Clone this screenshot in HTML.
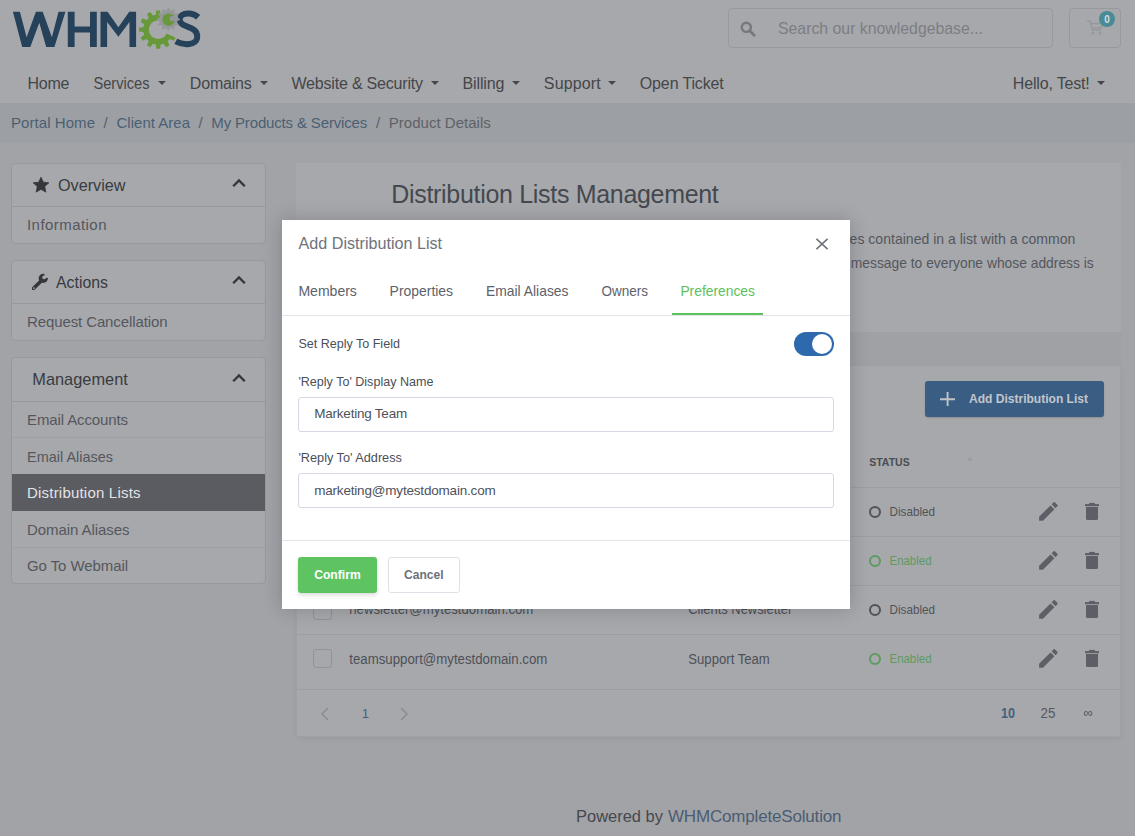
<!DOCTYPE html>
<html><head><meta charset="utf-8"><style>
html,body{margin:0;padding:0;width:1135px;height:836px;overflow:hidden;background:#a2a3a7;}
body{position:relative;font-family:"Liberation Sans", sans-serif;}
.r{position:absolute;}
text{white-space:pre;}
</style></head><body>
<div class="r" style="left:0px;top:0px;width:1135px;height:103px;background:#a7a8ac;"></div>
<div class="r" style="left:0px;top:103px;width:1135px;height:40px;background:#9c9fa3;"></div>
<div class="r" style="left:0px;top:143px;width:1135px;height:693px;background:#a2a3a7;"></div>
<svg class="r" style="left:0;top:0" width="260" height="60" viewBox="0 0 260 60">
<path d="M12.9,11.7 L19.9,11.7 L26.6,37.2 L35.9,11.7 L42.7,11.7 L51.9,37.2 L58.5,11.7 L65.4,11.7 L54.4,46.9 L46.2,46.9 L39.3,22.8 L30.3,46.9 L22.2,46.9 Z M67.8,11.7 H74.6 V26.4 H90 V11.7 H96.8 V46.9 H90 V32.6 H74.6 V46.9 H67.8 Z M100.5,11.7 L107.6,11.7 L118.4,27.2 L129.2,11.7 L136.1,11.7 L136.1,46.9 L129.5,46.9 L129.5,22 L118.4,36.8 L107.1,22 L107.1,46.9 L100.5,46.9 Z" fill="#26425a"/>
<path d="M198.2,17.2 C193.5,12.8 185.5,12.6 182,15.2 C178.3,18 178.8,22.8 184.2,25.2 L191.8,28.6 C197,31 197.6,35.2 197,38.6 C195.6,44.6 184.5,46 175.8,41.3" fill="none" stroke="#26425a" stroke-width="6"/>
<defs><mask id="m1"><rect width="260" height="60" fill="#fff"/><path d="M158.2,29.6 L176.74,-27.46 L240,-40 L240,67.74 Z" fill="#000"/></mask></defs>
<g mask="url(#m1)"><path d="M155.78,14.80 L156.28,10.40 L160.12,10.40 L160.62,14.80 L163.50,15.57 L166.14,12.01 L169.46,13.93 L167.70,17.99 L169.81,20.10 L173.87,18.34 L175.79,21.66 L172.23,24.30 L173.00,27.18 L177.40,27.68 L177.40,31.52 L173.00,32.02 L172.23,34.90 L175.79,37.54 L173.87,40.86 L169.81,39.10 L167.70,41.21 L169.46,45.27 L166.14,47.19 L163.50,43.63 L160.62,44.40 L160.12,48.80 L156.28,48.80 L155.78,44.40 L152.90,43.63 L150.26,47.19 L146.94,45.27 L148.70,41.21 L146.59,39.10 L142.53,40.86 L140.61,37.54 L144.17,34.90 L143.40,32.02 L139.00,31.52 L139.00,27.68 L143.40,27.18 L144.17,24.30 L140.61,21.66 L142.53,18.34 L146.59,20.10 L148.70,17.99 L146.94,13.93 L150.26,12.01 L152.90,15.57Z" fill="#67983a"/><circle cx="158.2" cy="29.6" r="9.4" fill="#a7a8ac"/></g>
<path d="M167.10,10.29 L167.51,8.04 L169.29,8.04 L169.70,10.29 L171.83,10.86 L173.31,9.11 L174.86,10.00 L174.08,12.16 L175.64,13.72 L177.80,12.94 L178.69,14.49 L176.94,15.97 L177.51,18.10 L179.76,18.51 L179.76,20.29 L177.51,20.70 L176.94,22.83 L178.69,24.31 L177.80,25.86 L175.64,25.08 L174.08,26.64 L174.86,28.80 L173.31,29.69 L171.83,27.94 L169.70,28.51 L169.29,30.76 L167.51,30.76 L167.10,28.51 L164.97,27.94 L163.49,29.69 L161.94,28.80 L162.72,26.64 L161.16,25.08 L159.00,25.86 L158.11,24.31 L159.86,22.83 L159.29,20.70 L157.04,20.29 L157.04,18.51 L159.29,18.10 L159.86,15.97 L158.11,14.49 L159.00,12.94 L161.16,13.72 L162.72,12.16 L161.94,10.00 L163.49,9.11 L164.97,10.86Z" fill="#96979b"/>
<circle cx="168.6" cy="19.6" r="6.2" fill="#67983a"/>
<circle cx="172.2" cy="18.6" r="2.6" fill="#96979b"/>
<path d="M172.2,16.2 L178,14.5 L178,20 L172.2,21 Z" fill="#96979b"/>
</svg>
<div class="r" style="left:728px;top:8px;width:325px;height:39.5px;background:transparent;border:1px solid #98999e;box-sizing:border-box;border-radius:4px;"></div>
<svg class="r" style="left:740px;top:21px" width="16" height="16" viewBox="0 0 16 16">
<circle cx="6.3" cy="6.3" r="4.6" fill="none" stroke="#76787d" stroke-width="2.4"/>
<line x1="9.8" y1="9.8" x2="14.2" y2="14.2" stroke="#76787d" stroke-width="2.8" stroke-linecap="round"/></svg>
<svg class="r" style="left:0;top:0" width="1135" height="836" viewBox="0 0 1135 836" font-family='"Liberation Sans", sans-serif'><text x="778" y="34" font-size="17" fill="#7c7e83" textLength="205" lengthAdjust="spacingAndGlyphs">Search our knowledgebase...</text></svg>
<div class="r" style="left:1069px;top:8px;width:51.5px;height:39.5px;background:transparent;border:1px solid #98999e;box-sizing:border-box;border-radius:4px;"></div>
<svg class="r" style="left:1086px;top:19px" width="18" height="17" viewBox="0 0 18 17">
<path d="M1,2 L4,2 L6.5,11 L15,11 M5,4.5 L16.5,4.5 L15,9 L6,9" fill="none" stroke="#96989c" stroke-width="1.6"/>
<circle cx="7" cy="14" r="1.5" fill="#96989c"/><circle cx="14" cy="14" r="1.5" fill="#96989c"/></svg>
<div class="r" style="left:1099px;top:11px;width:16px;height:16px;border-radius:8px;background:#4a8a96"></div>
<svg class="r" style="left:0;top:0" width="1135" height="836" viewBox="0 0 1135 836" font-family='"Liberation Sans", sans-serif'><text x="1107" y="22.6" font-size="10" fill="#d6dde0" font-weight="700" text-anchor="middle">0</text><text x="27.5" y="89" font-size="16" fill="#444649" textLength="42" lengthAdjust="spacing">Home</text><text x="93.5" y="89" font-size="16" fill="#444649" textLength="56" lengthAdjust="spacingAndGlyphs">Services</text></svg>
<svg class="r" style="left:158.3px;top:81.0px" width="8" height="5" viewBox="0 0 8 5"><path d="M0,0 L8,0 L4,4Z" fill="#444649"/></svg>
<svg class="r" style="left:0;top:0" width="1135" height="836" viewBox="0 0 1135 836" font-family='"Liberation Sans", sans-serif'><text x="189.8" y="89" font-size="16" fill="#444649" textLength="62" lengthAdjust="spacing">Domains</text></svg>
<svg class="r" style="left:259.8px;top:81.0px" width="8" height="5" viewBox="0 0 8 5"><path d="M0,0 L8,0 L4,4Z" fill="#444649"/></svg>
<svg class="r" style="left:0;top:0" width="1135" height="836" viewBox="0 0 1135 836" font-family='"Liberation Sans", sans-serif'><text x="291.5" y="89" font-size="16" fill="#444649" textLength="131.5" lengthAdjust="spacing">Website &amp; Security</text></svg>
<svg class="r" style="left:430.5px;top:81.0px" width="8" height="5" viewBox="0 0 8 5"><path d="M0,0 L8,0 L4,4Z" fill="#444649"/></svg>
<svg class="r" style="left:0;top:0" width="1135" height="836" viewBox="0 0 1135 836" font-family='"Liberation Sans", sans-serif'><text x="462.5" y="89" font-size="16" fill="#444649" textLength="42" lengthAdjust="spacing">Billing</text></svg>
<svg class="r" style="left:512.2px;top:81.0px" width="8" height="5" viewBox="0 0 8 5"><path d="M0,0 L8,0 L4,4Z" fill="#444649"/></svg>
<svg class="r" style="left:0;top:0" width="1135" height="836" viewBox="0 0 1135 836" font-family='"Liberation Sans", sans-serif'><text x="543.8" y="89" font-size="16" fill="#444649" textLength="57" lengthAdjust="spacing">Support</text></svg>
<svg class="r" style="left:607.5px;top:81.0px" width="8" height="5" viewBox="0 0 8 5"><path d="M0,0 L8,0 L4,4Z" fill="#444649"/></svg>
<svg class="r" style="left:0;top:0" width="1135" height="836" viewBox="0 0 1135 836" font-family='"Liberation Sans", sans-serif'><text x="639.8" y="89" font-size="16" fill="#444649" textLength="84" lengthAdjust="spacing">Open Ticket</text><text x="1012.8" y="89" font-size="16" fill="#444649" textLength="77" lengthAdjust="spacing">Hello, Test!</text></svg>
<svg class="r" style="left:1097.2px;top:81.0px" width="8" height="5" viewBox="0 0 8 5"><path d="M0,0 L8,0 L4,4Z" fill="#444649"/></svg>
<svg class="r" style="left:0;top:0" width="1135" height="836" viewBox="0 0 1135 836" font-family='"Liberation Sans", sans-serif'><text x="11" y="128" font-size="15" fill="#4b5f74" textLength="84" lengthAdjust="spacing">Portal Home</text><text x="103.5" y="128" font-size="15" fill="#5d6065">/</text><text x="116.5" y="128" font-size="15" fill="#4b5f74" textLength="73.5" lengthAdjust="spacing">Client Area</text><text x="198.5" y="128" font-size="15" fill="#5d6065">/</text><text x="211.3" y="128" font-size="15" fill="#4b5f74" textLength="156" lengthAdjust="spacing">My Products &amp; Services</text><text x="376" y="128" font-size="15" fill="#5d6065">/</text><text x="388.8" y="128" font-size="15" fill="#5f6166" textLength="102" lengthAdjust="spacing">Product Details</text></svg>
<div class="r" style="left:11px;top:163px;width:255px;height:80.5px;background:#a7a8ac;border:1px solid #97999d;box-sizing:border-box;border-radius:4px;"></div>
<div class="r" style="left:11px;top:206px;width:255px;height:1px;background:#97999d;"></div>
<svg class="r" style="left:32px;top:176px" width="18" height="18" viewBox="0 0 24 24"><path d="M12,1.5 L15.1,8.2 L22.5,9 L17,14 L18.5,21.5 L12,17.8 L5.5,21.5 L7,14 L1.5,9 L8.9,8.2Z" fill="#33363b" stroke="#33363b" stroke-width="1" stroke-linejoin="round"/></svg>
<svg class="r" style="left:0;top:0" width="1135" height="836" viewBox="0 0 1135 836" font-family='"Liberation Sans", sans-serif'><text x="58" y="191.3" font-size="17" fill="#383b40" textLength="67.5" lengthAdjust="spacingAndGlyphs">Overview</text></svg>
<svg class="r" style="left:231.5px;top:176.5px" width="15" height="11" viewBox="0 0 15 11"><path d="M1.2,9.2 L7,3.4 L12.8,9.2" fill="none" stroke="#33363b" stroke-width="2.3"/></svg>
<svg class="r" style="left:0;top:0" width="1135" height="836" viewBox="0 0 1135 836" font-family='"Liberation Sans", sans-serif'><text x="27" y="230" font-size="15" fill="#55575c" textLength="79.5" lengthAdjust="spacing">Information</text></svg>
<div class="r" style="left:11px;top:260px;width:255px;height:80.5px;background:#a7a8ac;border:1px solid #97999d;box-sizing:border-box;border-radius:4px;"></div>
<div class="r" style="left:11px;top:303px;width:255px;height:1px;background:#97999d;"></div>
<svg class="r" style="left:28px;top:270px" width="22" height="22" viewBox="0 0 22 22"><defs><mask id="wr"><rect width="22" height="22" fill="#fff"/><circle cx="16.2" cy="7.3" r="1.9" fill="#000"/><path d="M16.2,7.3 L16.6,3 L22,3 L21,8.2 Z" fill="#000"/><circle cx="5.9" cy="18.1" r="0.9" fill="#000"/></mask></defs><g mask="url(#wr)" fill="#33363b"><path d="M5.4,18.6 L13.6,10.4" stroke="#33363b" stroke-width="3.6" stroke-linecap="round"/><circle cx="15.3" cy="8.3" r="4.6"/></g></svg>
<svg class="r" style="left:0;top:0" width="1135" height="836" viewBox="0 0 1135 836" font-family='"Liberation Sans", sans-serif'><text x="56" y="288.2" font-size="17" fill="#383b40" textLength="52" lengthAdjust="spacingAndGlyphs">Actions</text></svg>
<svg class="r" style="left:231.5px;top:273.5px" width="15" height="11" viewBox="0 0 15 11"><path d="M1.2,9.2 L7,3.4 L12.8,9.2" fill="none" stroke="#33363b" stroke-width="2.3"/></svg>
<svg class="r" style="left:0;top:0" width="1135" height="836" viewBox="0 0 1135 836" font-family='"Liberation Sans", sans-serif'><text x="27" y="327" font-size="15" fill="#55575c" textLength="140.5" lengthAdjust="spacing">Request Cancellation</text></svg>
<div class="r" style="left:11px;top:357px;width:255px;height:227px;background:#a7a8ac;border:1px solid #97999d;box-sizing:border-box;border-radius:4px;"></div>
<div class="r" style="left:11px;top:401px;width:255px;height:1px;background:#97999d;"></div>
<svg class="r" style="left:0;top:0" width="1135" height="836" viewBox="0 0 1135 836" font-family='"Liberation Sans", sans-serif'><text x="32.3" y="385.3" font-size="17" fill="#383b40" textLength="95.5" lengthAdjust="spacingAndGlyphs">Management</text></svg>
<svg class="r" style="left:231.5px;top:371.5px" width="15" height="11" viewBox="0 0 15 11"><path d="M1.2,9.2 L7,3.4 L12.8,9.2" fill="none" stroke="#33363b" stroke-width="2.3"/></svg>
<svg class="r" style="left:0;top:0" width="1135" height="836" viewBox="0 0 1135 836" font-family='"Liberation Sans", sans-serif'><text x="27" y="424.8" font-size="15" fill="#55575c" textLength="101" lengthAdjust="spacing">Email Accounts</text></svg>
<div class="r" style="left:12px;top:437.3px;width:253px;height:1px;background:#9fa0a4;"></div>
<svg class="r" style="left:0;top:0" width="1135" height="836" viewBox="0 0 1135 836" font-family='"Liberation Sans", sans-serif'><text x="27" y="461.5" font-size="15" fill="#55575c" textLength="86" lengthAdjust="spacingAndGlyphs">Email Aliases</text></svg>
<div class="r" style="left:12px;top:474px;width:253px;height:36.6px;background:#5b5c61;"></div>
<svg class="r" style="left:0;top:0" width="1135" height="836" viewBox="0 0 1135 836" font-family='"Liberation Sans", sans-serif'><text x="27" y="498.3" font-size="15" fill="#e2e3e6" textLength="113.5" lengthAdjust="spacing">Distribution Lists</text><text x="27" y="534.8" font-size="15" fill="#55575c" textLength="102.5" lengthAdjust="spacing">Domain Aliases</text></svg>
<div class="r" style="left:12px;top:547.4px;width:253px;height:1px;background:#9fa0a4;"></div>
<div class="r" style="left:12px;top:547.4px;width:253px;height:1px;background:#9fa0a4;"></div>
<svg class="r" style="left:0;top:0" width="1135" height="836" viewBox="0 0 1135 836" font-family='"Liberation Sans", sans-serif'><text x="27" y="571.3" font-size="15" fill="#55575c" textLength="101" lengthAdjust="spacing">Go To Webmail</text></svg>
<div class="r" style="left:296px;top:163px;width:825px;height:168.7px;background:#a7a8ac;"></div>
<svg class="r" style="left:0;top:0" width="1135" height="836" viewBox="0 0 1135 836" font-family='"Liberation Sans", sans-serif'><text x="391.3" y="202.7" font-size="25" fill="#45484e" textLength="327.5" lengthAdjust="spacing">Distribution Lists Management</text><text x="849.6" y="244" font-size="14.5" fill="#54575d" textLength="225.7" lengthAdjust="spacingAndGlyphs">es contained in a list with a common</text><text x="850.8" y="268" font-size="14.5" fill="#54575d" textLength="243" lengthAdjust="spacingAndGlyphs">message to everyone whose address is</text></svg>
<div class="r" style="left:296px;top:331.7px;width:825px;height:33px;background:#a0a1a5;"></div>
<div class="r" style="left:296px;top:364.7px;width:824.5px;height:372.3px;background:#a7a8ac;border:1px solid #9fa1a5;box-sizing:border-box;border-radius:3px;box-shadow:0 2px 5px rgba(0,0,0,0.05);"></div>
<div class="r" style="left:925px;top:380.7px;width:179px;height:36.6px;background:#3a5d84;border-radius:3px;box-shadow:0 1px 2px rgba(0,0,0,0.15);"></div>
<svg class="r" style="left:939.8px;top:391.8px" width="15.4" height="14.4" viewBox="0 0 15.4 14.4"><path d="M7.6,0 V14.4 M0,7.2 H15.4" stroke="#c0c4c9" stroke-width="1.9"/></svg>
<svg class="r" style="left:0;top:0" width="1135" height="836" viewBox="0 0 1135 836" font-family='"Liberation Sans", sans-serif'><text x="969" y="402.8" font-size="13.2" fill="#c2c6cb" font-weight="700" textLength="119" lengthAdjust="spacingAndGlyphs">Add Distribution List</text><text x="869.2" y="466.3" font-size="11.5" fill="#4a4d52" font-weight="700" textLength="40.5" lengthAdjust="spacingAndGlyphs">STATUS</text></svg>
<svg class="r" style="left:967.2px;top:456px" width="6" height="5" viewBox="0 0 6 5"><path d="M0,5 L6,5 L3,0Z" fill="#9c9ea2"/></svg>
<div class="r" style="left:296px;top:487px;width:824.5px;height:1px;background:#9c9ea2;"></div>
<div class="r" style="left:296px;top:536px;width:824.5px;height:1px;background:#9c9ea2;"></div>
<div class="r" style="left:296px;top:585px;width:824.5px;height:1px;background:#9c9ea2;"></div>
<div class="r" style="left:296px;top:634px;width:824.5px;height:1px;background:#9c9ea2;"></div>
<div class="r" style="left:296px;top:689px;width:824.5px;height:1px;background:#9c9ea2;"></div>
<div class="r" style="left:869px;top:505.8px;width:12px;height:12px;border-radius:50%;border:2px solid #505358;box-sizing:border-box"></div>
<svg class="r" style="left:0;top:0" width="1135" height="836" viewBox="0 0 1135 836" font-family='"Liberation Sans", sans-serif'><text x="889.5" y="516.3" font-size="13" fill="#505358" textLength="45.5" lengthAdjust="spacingAndGlyphs">Disabled</text></svg>
<svg class="r" style="left:1036.10px;top:499.20px" width="24.8" height="24.8" viewBox="0 0 24 24"><path d="M3,17.25V21h3.75L17.81,9.94l-3.75-3.75L3,17.25zM20.71,7.04c.39-.39.39-1.02,0-1.41l-2.34-2.34c-.39-.39-1.02-.39-1.41,0l-1.83,1.83,3.75,3.75,1.83-1.83z" fill="#5c5f66"/></svg>
<svg class="r" style="left:1085px;top:501.90000000000003px" width="14" height="19" viewBox="0 0 14 19"><rect x="4.2" y="0.9" width="5.6" height="2" fill="#5c5f66"/><rect x="0" y="2.1" width="14" height="2.1" fill="#5c5f66"/><path d="M1,5 H13 V16.6 Q13,18.1 11.5,18.1 H2.5 Q1,18.1 1,16.6Z" fill="#5c5f66"/></svg>
<div class="r" style="left:869px;top:554.9px;width:12px;height:12px;border-radius:50%;border:2px solid #5d9a60;box-sizing:border-box"></div>
<svg class="r" style="left:0;top:0" width="1135" height="836" viewBox="0 0 1135 836" font-family='"Liberation Sans", sans-serif'><text x="889.5" y="565.4" font-size="13" fill="#5d9a60" textLength="42" lengthAdjust="spacingAndGlyphs">Enabled</text></svg>
<svg class="r" style="left:1036.10px;top:548.30px" width="24.8" height="24.8" viewBox="0 0 24 24"><path d="M3,17.25V21h3.75L17.81,9.94l-3.75-3.75L3,17.25zM20.71,7.04c.39-.39.39-1.02,0-1.41l-2.34-2.34c-.39-.39-1.02-.39-1.41,0l-1.83,1.83,3.75,3.75,1.83-1.83z" fill="#5c5f66"/></svg>
<svg class="r" style="left:1085px;top:551.0px" width="14" height="19" viewBox="0 0 14 19"><rect x="4.2" y="0.9" width="5.6" height="2" fill="#5c5f66"/><rect x="0" y="2.1" width="14" height="2.1" fill="#5c5f66"/><path d="M1,5 H13 V16.6 Q13,18.1 11.5,18.1 H2.5 Q1,18.1 1,16.6Z" fill="#5c5f66"/></svg>
<div class="r" style="left:869px;top:603.9px;width:12px;height:12px;border-radius:50%;border:2px solid #505358;box-sizing:border-box"></div>
<svg class="r" style="left:0;top:0" width="1135" height="836" viewBox="0 0 1135 836" font-family='"Liberation Sans", sans-serif'><text x="889.5" y="614.4" font-size="13" fill="#505358" textLength="45.5" lengthAdjust="spacingAndGlyphs">Disabled</text></svg>
<svg class="r" style="left:1036.10px;top:597.30px" width="24.8" height="24.8" viewBox="0 0 24 24"><path d="M3,17.25V21h3.75L17.81,9.94l-3.75-3.75L3,17.25zM20.71,7.04c.39-.39.39-1.02,0-1.41l-2.34-2.34c-.39-.39-1.02-.39-1.41,0l-1.83,1.83,3.75,3.75,1.83-1.83z" fill="#5c5f66"/></svg>
<svg class="r" style="left:1085px;top:600.0px" width="14" height="19" viewBox="0 0 14 19"><rect x="4.2" y="0.9" width="5.6" height="2" fill="#5c5f66"/><rect x="0" y="2.1" width="14" height="2.1" fill="#5c5f66"/><path d="M1,5 H13 V16.6 Q13,18.1 11.5,18.1 H2.5 Q1,18.1 1,16.6Z" fill="#5c5f66"/></svg>
<div class="r" style="left:869px;top:652.9px;width:12px;height:12px;border-radius:50%;border:2px solid #5d9a60;box-sizing:border-box"></div>
<svg class="r" style="left:0;top:0" width="1135" height="836" viewBox="0 0 1135 836" font-family='"Liberation Sans", sans-serif'><text x="889.5" y="663.4" font-size="13" fill="#5d9a60" textLength="42" lengthAdjust="spacingAndGlyphs">Enabled</text></svg>
<svg class="r" style="left:1036.10px;top:646.30px" width="24.8" height="24.8" viewBox="0 0 24 24"><path d="M3,17.25V21h3.75L17.81,9.94l-3.75-3.75L3,17.25zM20.71,7.04c.39-.39.39-1.02,0-1.41l-2.34-2.34c-.39-.39-1.02-.39-1.41,0l-1.83,1.83,3.75,3.75,1.83-1.83z" fill="#5c5f66"/></svg>
<svg class="r" style="left:1085px;top:649.0px" width="14" height="19" viewBox="0 0 14 19"><rect x="4.2" y="0.9" width="5.6" height="2" fill="#5c5f66"/><rect x="0" y="2.1" width="14" height="2.1" fill="#5c5f66"/><path d="M1,5 H13 V16.6 Q13,18.1 11.5,18.1 H2.5 Q1,18.1 1,16.6Z" fill="#5c5f66"/></svg>
<div class="r" style="left:313.2px;top:600.5px;width:19.2px;height:19.2px;border:1px solid #8f939a;border-radius:3px;box-sizing:border-box"></div>
<svg class="r" style="left:0;top:0" width="1135" height="836" viewBox="0 0 1135 836" font-family='"Liberation Sans", sans-serif'><text x="349.3" y="614.2" font-size="14" fill="#4d5056" textLength="184" lengthAdjust="spacingAndGlyphs">newsletter@mytestdomain.com</text><text x="688.3" y="614.2" font-size="14" fill="#4d5056" textLength="104" lengthAdjust="spacingAndGlyphs">Clients Newsletter</text></svg>
<div class="r" style="left:313.2px;top:649.3px;width:19.2px;height:19.2px;border:1px solid #8f939a;border-radius:3px;box-sizing:border-box"></div>
<svg class="r" style="left:0;top:0" width="1135" height="836" viewBox="0 0 1135 836" font-family='"Liberation Sans", sans-serif'><text x="349.3" y="663.8" font-size="14" fill="#4d5056" textLength="198" lengthAdjust="spacingAndGlyphs">teamsupport@mytestdomain.com</text><text x="688.3" y="663.8" font-size="14" fill="#4d5056" textLength="81.5" lengthAdjust="spacingAndGlyphs">Support Team</text></svg>
<svg class="r" style="left:320px;top:707px" width="10" height="14" viewBox="0 0 10 14"><path d="M8,1 L2,7 L8,13" fill="none" stroke="#8a8c91" stroke-width="1.5"/></svg>
<svg class="r" style="left:0;top:0" width="1135" height="836" viewBox="0 0 1135 836" font-family='"Liberation Sans", sans-serif'><text x="361.8" y="717.8" font-size="13" fill="#45607e">1</text></svg>
<svg class="r" style="left:399px;top:707px" width="10" height="14" viewBox="0 0 10 14"><path d="M2,1 L8,7 L2,13" fill="none" stroke="#8a8c91" stroke-width="1.5"/></svg>
<svg class="r" style="left:0;top:0" width="1135" height="836" viewBox="0 0 1135 836" font-family='"Liberation Sans", sans-serif'><text x="1001" y="718" font-size="14" fill="#45607e" font-weight="700" textLength="14" lengthAdjust="spacingAndGlyphs">10</text><text x="1040.5" y="718" font-size="14" fill="#55575c" textLength="14.8" lengthAdjust="spacingAndGlyphs">25</text><text x="1083.5" y="717" font-size="13" fill="#55575c">&#8734;</text><text x="576" y="822" font-size="17" fill="#45484e" textLength="87" lengthAdjust="spacingAndGlyphs">Powered by</text><text x="668" y="822" font-size="17" fill="#4a5d73" textLength="173.5" lengthAdjust="spacing">WHMCompleteSolution</text></svg>
<div class="r" style="left:282px;top:220px;width:568px;height:388.5px;background:#fff;box-shadow:0 0 18px rgba(20,22,30,0.22)"></div>
<svg class="r" style="left:0;top:0" width="1135" height="836" viewBox="0 0 1135 836" font-family='"Liberation Sans", sans-serif'><text x="298.6" y="248.8" font-size="16.8" fill="#6e737d" textLength="143.5" lengthAdjust="spacingAndGlyphs">Add Distribution List</text></svg>
<svg class="r" style="left:815px;top:238px" width="14" height="13" viewBox="0 0 14 13"><path d="M1.4,0.9 L12.6,11.1 M12.6,0.9 L1.4,11.1" stroke="#6d727a" stroke-width="1.55"/></svg>
<svg class="r" style="left:0;top:0" width="1135" height="836" viewBox="0 0 1135 836" font-family='"Liberation Sans", sans-serif'><text x="298.4" y="296" font-size="14.5" fill="#5d626c" textLength="58.5" lengthAdjust="spacingAndGlyphs">Members</text><text x="389.6" y="296" font-size="14.5" fill="#5d626c" textLength="63.5" lengthAdjust="spacingAndGlyphs">Properties</text><text x="486" y="296" font-size="14.5" fill="#5d626c" textLength="82.5" lengthAdjust="spacingAndGlyphs">Email Aliases</text><text x="601.4" y="296" font-size="14.5" fill="#5d626c" textLength="46.5" lengthAdjust="spacingAndGlyphs">Owners</text><text x="680.4" y="296" font-size="14.5" fill="#5cc25a" textLength="74.5" lengthAdjust="spacingAndGlyphs">Preferences</text></svg>
<div class="r" style="left:282px;top:315px;width:568px;height:1px;background:#e5e6ed;"></div>
<div class="r" style="left:672px;top:313.2px;width:91px;height:2.1px;background:#5cc25a;"></div>
<svg class="r" style="left:0;top:0" width="1135" height="836" viewBox="0 0 1135 836" font-family='"Liberation Sans", sans-serif'><text x="298.4" y="348.3" font-size="13.5" fill="#4a4f59" textLength="101.5" lengthAdjust="spacingAndGlyphs">Set Reply To Field</text></svg>
<div class="r" style="left:794px;top:332px;width:40px;height:24px;border-radius:12px;background:#2e69ae"></div>
<div class="r" style="left:811.6px;top:333.8px;width:20.6px;height:20.6px;border-radius:50%;background:#fff"></div>
<svg class="r" style="left:0;top:0" width="1135" height="836" viewBox="0 0 1135 836" font-family='"Liberation Sans", sans-serif'><text x="298.4" y="386" font-size="13.5" fill="#4a4f59" textLength="135" lengthAdjust="spacingAndGlyphs">'Reply To' Display Name</text></svg>
<div class="r" style="left:298.4px;top:396.7px;width:535.6px;height:35px;background:#fff;border:1px solid #d6d9e4;box-sizing:border-box;border-radius:3px;"></div>
<svg class="r" style="left:0;top:0" width="1135" height="836" viewBox="0 0 1135 836" font-family='"Liberation Sans", sans-serif'><text x="314.2" y="418.3" font-size="13.5" fill="#4d525c" textLength="93" lengthAdjust="spacing">Marketing Team</text><text x="298.4" y="462.2" font-size="13.5" fill="#4a4f59" textLength="103.5" lengthAdjust="spacingAndGlyphs">'Reply To' Address</text></svg>
<div class="r" style="left:298.4px;top:472.5px;width:535.6px;height:35.3px;background:#fff;border:1px solid #d6d9e4;box-sizing:border-box;border-radius:3px;"></div>
<svg class="r" style="left:0;top:0" width="1135" height="836" viewBox="0 0 1135 836" font-family='"Liberation Sans", sans-serif'><text x="314.2" y="494.5" font-size="13.5" fill="#4d525c" textLength="181.5" lengthAdjust="spacing">marketing@mytestdomain.com</text></svg>
<div class="r" style="left:282px;top:540px;width:568px;height:1px;background:#e5e6ed;"></div>
<div class="r" style="left:298.4px;top:557px;width:78.3px;height:35.7px;background:#5ec462;border-radius:3px;box-shadow:0 2px 4px rgba(0,0,0,0.15);"></div>
<svg class="r" style="left:0;top:0" width="1135" height="836" viewBox="0 0 1135 836" font-family='"Liberation Sans", sans-serif'><text x="314.2" y="578.8" font-size="13.5" fill="#ffffff" font-weight="700" textLength="46.5" lengthAdjust="spacingAndGlyphs">Confirm</text></svg>
<div class="r" style="left:388.3px;top:557px;width:71.3px;height:35.7px;background:#fff;border:1px solid #dfe1e8;box-sizing:border-box;border-radius:3px;"></div>
<svg class="r" style="left:0;top:0" width="1135" height="836" viewBox="0 0 1135 836" font-family='"Liberation Sans", sans-serif'><text x="404" y="578.8" font-size="13.5" fill="#6c717c" font-weight="700" textLength="39.5" lengthAdjust="spacingAndGlyphs">Cancel</text></svg>
</body></html>
